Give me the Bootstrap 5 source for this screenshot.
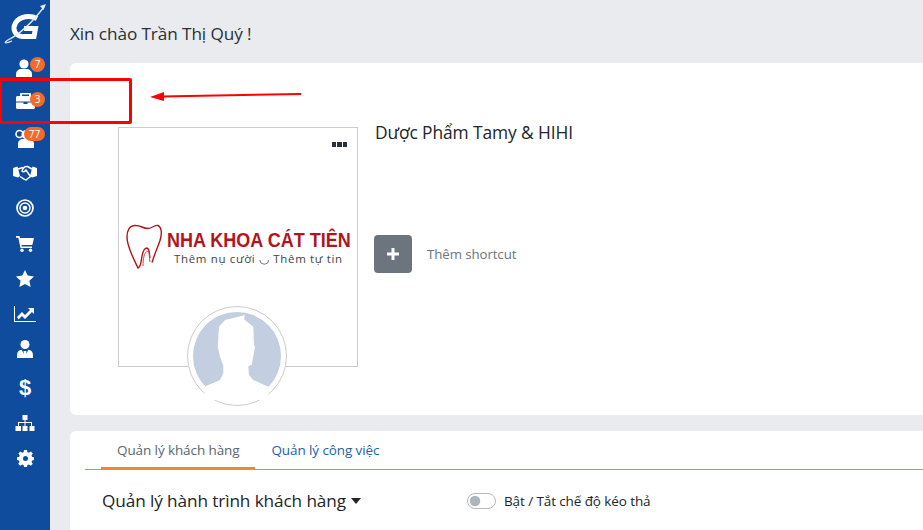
<!DOCTYPE html>
<html lang="vi">
<head>
    <meta charset="utf-8">
    <title>Trang chủ</title>
    <link rel="stylesheet" href="https://cdn.jsdelivr.net/npm/bootstrap@5.3.2/dist/css/bootstrap.min.css">
    <script src="https://cdn.jsdelivr.net/npm/bootstrap@5.3.2/dist/js/bootstrap.bundle.min.js"></script>
<style>
    html,body{
        height: 100%;
        overflow: hidden;
    }
    body{
        font-family: "Open Sans", "Noto Sans", sans-serif;
        background: #e9ebef;
        color: #212529;
    }
    #page{
        height: 530px;
    }
    #side{
        width: 50px;
        background: #0f4c9e;
        flex: none;
    }
    #side-logo{
        height: 50px;
    }
    .side-item{
        height: 35.2px;
        position: relative;
    }
    .side-item svg{
        fill: #fff;
    }
    .side-up{
        padding-bottom: 3px;
    }
    .side-dollar{
        color: #fff;
        font: 700 22px "Liberation Sans", sans-serif;
        margin-top: 3.5px;
    }
    .side-badge{
        position: absolute;
        left: 30px;
        top: 6.5px;
        min-width: 15px;
        height: 15px;
        line-height: 15px;
        padding: 0 3px;
        font-size: 10px;
        font-weight: 400;
        color: #fff;
        background: #f26b2a;
        border-radius: 8px;
        text-align: center;
    }
    .side-badge.wide{
        left: 24px;
        width: 21px;
        height: 14px;
        line-height: 14px;
    }
    #main{
        width: 873px;
        flex: none;
        padding-left: 20px;
    }
    #hello{
        height: 63px;
        padding-top: 4px;
        font-size: 17.2px;
        letter-spacing: -.1px;
        color: #2b2f33;
    }
    .panel{
        background: #fff;
        border-radius: 6px 0 0 6px;
    }
    #profile{
        height: 352px;
        padding: 64px 0 0 48px;
        margin-bottom: 16px;
    }
    #cover{
        width: 240px;
        height: 240px;
        border: 1px solid #ccc;
        position: relative;
        flex: none;
    }
    #cover-menu{
        position: absolute;
        right: 10px;
        top: 14px;
        gap: 1px;
    }
    #cover-menu i{
        display: block;
        width: 4.5px;
        height: 4.5px;
        background: #27303d;
    }
    #brand{
        padding-top: 96px;
        padding-left: 7px;
    }
    #brand-logo{
        flex: none;
        margin-right: 1px;
    }
    #brand-text{
        padding-top: 4px;
    }
    #brand-name{
        font: 700 20px/24px "Liberation Sans", sans-serif;
        color: #b3141c;
        white-space: nowrap;
        transform: scaleX(.9);
        transform-origin: left;
    }
    #brand-sub{
        font: 400 11.5px/13px "Open Sans", sans-serif;
        color: #444;
        letter-spacing: .65px;
        white-space: nowrap;
        padding-left: 7px;
    }
    #avatar{
        position: absolute;
        left: 68px;
        top: 178px;
        width: 100px;
        height: 100px;
        background: #fff;
        border: 1px solid #ccc;
        border-radius: 50%;
    }
    #info{
        padding-left: 16px;
    }
    #company{
        font-size: 17.4px;
        line-height: 24px;
        letter-spacing: -.1px;
        margin-top: -7px;
        height: 115px;
        padding-left: 1px;
    }
    #add-btn{
        width: 38px;
        height: 38px;
        padding: 0;
        background: #6c757d;
        border: 0;
        border-radius: 4px;
    }
    #add-label{
        font-size: 13.3px;
        letter-spacing: -.1px;
        color: #6c757d;
        margin-left: 15px;
        padding-top: 1px;
    }
    #work{
        height: 120px;
        padding: 0 0 0 15px;
    }
    #tabs{
        border-bottom: 1px solid #f58235;
        padding-left: 16px;
    }
    #tabs .nav-link{
        border: 0;
        border-radius: 0;
        font-size: 13.5px;
        letter-spacing: -.1px;
        padding: 0 16px;
        height: 38px;
        line-height: 39px;
        color: #2461a8;
        background: none;
    }
    #tabs .nav-link.active{
        color: #5b6670;
        border-bottom: 2px solid #f58235;
    }
    #journey-row{
        padding: 19px 0 0 17px;
    }
    #journey{
        width: 365px;
        flex: none;
        font-size: 17.2px;
        line-height: 24px;
        letter-spacing: -.1px;
        color: #212529;
        padding: 0;
        border: 0;
        background: none;
        text-align: left;
    }
    #journey::after{
        border-top-width: 6px;
        border-left-width: 5.5px;
        border-right-width: 5.5px;
        margin-left: 5px;
        vertical-align: 3px;
    }
    #drag-switch{
        min-height: 0;
        margin: 0;
        padding-left: 37px;
        font-size: 13.5px;
        letter-spacing: -.1px;
    }
    #drag-switch .form-check-input{
        width: 29px;
        height: 16px;
        margin: 2px 0 0 -37px;
        border-color: #b3bac2;
        background-image: url("data:image/svg+xml,%3csvg xmlns='http://www.w3.org/2000/svg' viewBox='-4 -4 8 8'%3e%3ccircle r='3' fill='%23adb5bd'/%3e%3c/svg%3e");
    }
    #red-box{
        position: absolute;
        left: -1px;
        top: 78px;
        width: 133px;
        height: 46px;
        border: 3px solid #f00;
        border-radius: 2px;
    }
    #red-arrow{
        position: absolute;
        left: 148px;
        top: 88px;
    }
</style>
</head>
<body>
    <div id="page" class="d-flex">
        <div id="side" class="d-flex flex-column">
            <div id="side-logo">
                <svg width="50" height="50" viewBox="0 0 50 50">
                    <path d="M37 18.500C30 15 20 16 15.500 23 12 29 15 36 22 36.500H34L35.500 28.500H24" fill="none" stroke="#fff" stroke-width="5"/>
                    <path d="M44 7C34 20 20 34 8 40 3 43 5 44 12 41" fill="none" stroke="#e3ebf5" stroke-width="1.300"/>
                    <path d="M46 4l-6 2 3.500 4z" fill="#e3ebf5"/>
                </svg>
            </div>
            <div class="side-item d-flex align-items-center justify-content-center">
                <svg width="20" height="18" viewBox="0 0 20 18"><circle cx="9" cy="5" r="4.600"/><path d="M1 18v-3c0-3 3-5 5-5h6c2 0 5 2 5 5v3z"/></svg>
                <span class="side-badge">7</span>
            </div>
            <div class="side-item side-up d-flex align-items-center justify-content-center">
                <svg width="19" height="16" viewBox="0 0 19 16"><path d="M6 3V1.500h7V3h2V1c0-.6-.5-1-1-1H5c-.5 0-1 .4-1 1v2zM0 4.500C0 3.600.6 3 1.500 3h16c.9 0 1.500.6 1.500 1.500V8.500H0zM0 9.500h7.500v1.500h4V9.500H19V14.500c0 .9-.6 1.500-1.500 1.500h-16C.6 16 0 15.400 0 14.500z"/></svg>
                <span class="side-badge">3</span>
            </div>
            <div class="side-item d-flex align-items-center justify-content-center">
                <svg width="20" height="20" viewBox="0 0 20 20"><circle cx="4.500" cy="6" r="3.500" fill="none" stroke="#fff" stroke-width="1.600"/><circle cx="11" cy="6.500" r="4.500"/><path d="M3 20v-4c0-3 2-5 5-5h6c3 0 5 2 5 5v4z"/></svg>
                <span class="side-badge wide">77</span>
            </div>
            <div class="side-item d-flex align-items-center justify-content-center">
                <svg width="24" height="16" viewBox="0 0 24 16"><path d="M0 3l4.500-1.500L7 11 5 12.500 0 11zM24 3L19.500 1.500 17 11l2 1.500L24 11z"/><path d="M5 4L10 2.500M19 4L14.500 1.500C12 1 10 3 9 6c1.500 1.500 3 .5 4-1l4.500 6.500-2 1.500-2.500 2-2-.8L7 11.500" fill="none" stroke="#fff" stroke-width="1.500"/></svg>
            </div>
            <div class="side-item d-flex align-items-center justify-content-center">
                <svg width="18" height="18" viewBox="0 0 18 18"><circle cx="9" cy="9" r="8" fill="none" stroke="#fff" stroke-width="1.700"/><circle cx="9" cy="9" r="5" fill="none" stroke="#fff" stroke-width="1.500"/><circle cx="9" cy="9" r="2.300"/></svg>
            </div>
            <div class="side-item d-flex align-items-center justify-content-center">
                <svg width="18" height="16" viewBox="0 0 18 16"><path d="M0 0h3.500l.5 2h14l-1.700 7H5.500l.3 1.500H16V12H4.500L2.300 1.700H0z"/><circle cx="6" cy="14.300" r="1.700"/><circle cx="14.500" cy="14.300" r="1.700"/></svg>
            </div>
            <div class="side-item d-flex align-items-center justify-content-center">
                <svg width="18" height="17" viewBox="0 0 18 17"><path d="M9 0l2.700 5.600 6.300.8-4.600 4.300 1.200 6.300L9 13.900 3.400 17l1.200-6.300L0 6.400l6.300-.8z"/></svg>
            </div>
            <div class="side-item d-flex align-items-center justify-content-center">
                <svg width="22" height="16" viewBox="0 0 22 16"><path d="M0 0h1v15h21v1H0z"/><path d="M3 11l5-5 3 3 5-5-2-2h6v6l-2-2-7 7-3-3-3.500 3.500z"/></svg>
            </div>
            <div class="side-item d-flex align-items-center justify-content-center">
                <svg width="16" height="18" viewBox="0 0 16 18"><circle cx="8" cy="4.500" r="4.500"/><path d="M0 18v-3c0-3 2-5 4.500-5.200L7 14l-.5-3h3L9 14l2.500-4.200C14 10 16 12 16 15v3z"/></svg>
            </div>
            <div class="side-item d-flex align-items-center justify-content-center side-dollar">$</div>
            <div class="side-item d-flex align-items-center justify-content-center">
                <svg width="20" height="16" viewBox="0 0 20 16"><path d="M7.500 0h5v5h-2v2H17v4h2.500v5h-5v-5H16V8h-5.500v3H12.500v5h-5v-5h2V8H4v3h2v5H.5v-5H3V7h6.500V5h-2z"/></svg>
            </div>
            <div class="side-item d-flex align-items-center justify-content-center">
                <svg width="17" height="17" viewBox="0 0 17 17"><path fill-rule="evenodd" d="M7 0h3l.4 2.200 1.500.6L13.800 1.500l2 2-1.300 1.900.6 1.500L17 7.200v2.800l-1.900.4-.6 1.500 1.300 1.800-2 2-1.900-1.300-1.500.6L10 17H7l-.4-2-1.500-.6-1.900 1.300-2-2 1.300-1.800-.6-1.500L0 10V7.200l2.100-.3.6-1.500L1.400 3.500l2-2 1.700 1.300 1.500-.6zM8.500 6a2.500 2.500 0 1 0 0 5 2.500 2.500 0 0 0 0-5z"/></svg>
            </div>
        </div>

        <div id="main">
            <div id="hello" class="d-flex align-items-center">Xin chào Trần Thị Quý !</div>

            <div id="profile" class="panel d-flex">
                <div id="cover">
                    <div id="cover-menu" class="d-flex"><i></i><i></i><i></i></div>
                    <div id="brand" class="d-flex">
                        <svg id="brand-logo" width="40" height="46" viewBox="0 0 40 46">
                            <path d="M10 1.500C3 1 1 7 1 13c0 10 6 20 11 31 3-1 3-6 4-12 1-5 2-8 5-8 3 1 2 6 3 10 M10 1.500c5 0 7 3 12 3 4 0 7-4 10-3 4 2 4 9 2 15-2 6-5 12-8 22" fill="none" stroke="#b3141c" stroke-width="1.400"/>
                            <path d="M17 42c0-7 1-14 5-15 2 1 1 6 2 11" fill="none" stroke="#c9464c" stroke-width="1"/>
                        </svg>
                        <div id="brand-text">
                            <div id="brand-name">NHA KHOA CÁT TIÊN</div>
                            <div id="brand-sub">Thêm nụ cười ◡ Thêm tự tin</div>
                        </div>
                    </div>
                    <div id="avatar" class="d-flex align-items-center justify-content-center">
                        <svg width="88" height="88" viewBox="0 0 88 88">
                            <circle cx="44" cy="44" r="44" fill="#c3cee1"/>
                            <path fill="#fff" d="M52 3L51 7.300 60.300 14.700 61 33 62 34.700 58.700 53 55.300 54 56 63 60.300 68 75.300 74.700 75 88H10L13 74 27 68 30.300 61.300 30.300 54 27 44.700 24.700 34.700 26 14.700 32 8z"/>
                        </svg>
                    </div>
                </div>
                <div id="info">
                    <div id="company">Dược Phẩm Tamy &amp; HIHI</div>
                    <div class="d-flex align-items-center">
                        <button id="add-btn" class="btn d-flex align-items-center justify-content-center" type="button">
                            <svg width="12" height="12" viewBox="0 0 12 12"><path fill="#fff" d="M4.500 0h3v4.500H12v3H7.500V12h-3V7.500H0v-3h4.500z"/></svg>
                        </button>
                        <span id="add-label">Thêm shortcut</span>
                    </div>
                </div>
            </div>

            <div id="work" class="panel">
                <ul id="tabs" class="nav">
                    <li class="nav-item"><a class="nav-link active" href="#">Quản lý khách hàng</a></li>
                    <li class="nav-item"><a class="nav-link" href="#">Quản lý công việc</a></li>
                </ul>
                <div id="journey-row" class="d-flex align-items-center">
                    <button id="journey" class="dropdown-toggle" type="button">Quản lý hành trình khách hàng</button>
                    <div id="drag-switch" class="form-check form-switch">
                        <input class="form-check-input" type="checkbox" id="drag-toggle">
                        <label class="form-check-label" for="drag-toggle">Bật / Tắt chế độ kéo thả</label>
                    </div>
                </div>
            </div>
        </div>
    </div>

    <div id="red-box"></div>
    <svg id="red-arrow" width="156" height="16" viewBox="0 0 156 16">
        <path d="M153 6L14 8.500" stroke="#f00" stroke-width="2" fill="none"/>
        <path d="M2 9l14-5 0 9z" fill="#f00"/>
    </svg>
</body>
</html>
